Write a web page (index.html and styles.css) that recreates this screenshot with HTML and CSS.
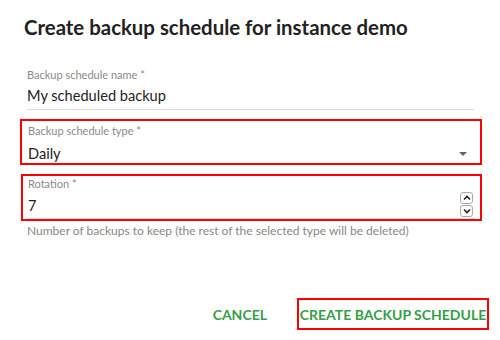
FILE: index.html
```html
<!DOCTYPE html>
<html>
<head>
<meta charset="utf-8">
<link rel="stylesheet" href="styles.css">
</head>
<body>
<div class="dialog">
  <h1 class="title">Create backup schedule for instance demo</h1>
  <div class="field plain">
    <div class="label">Backup schedule name *</div>
    <div class="value">My scheduled backup</div>
  </div>
  <div class="hl hl-type">
    <div class="field select">
      <div class="label">Backup schedule type *</div>
      <div class="row">
        <div class="value">Daily</div>
        <span class="caret"></span>
      </div>
    </div>
  </div>
  <div class="hl hl-rot">
    <div class="field number">
      <div class="label">Rotation *</div>
      <div class="row">
        <div class="value">7</div>
        <div class="spin">
          <span class="spin-btn"><svg width="8" height="6" viewBox="0 0 8 6"><path d="M1 4.5 L4 1.5 L7 4.5" fill="none" stroke="#222" stroke-width="1.6"/></svg></span>
          <span class="spin-btn"><svg width="8" height="6" viewBox="0 0 8 6"><path d="M1 1.5 L4 4.5 L7 1.5" fill="none" stroke="#222" stroke-width="1.6"/></svg></span>
        </div>
      </div>
    </div>
  </div>
  <div class="helper">Number of backups to keep (the rest of the selected type will be deleted)</div>
  <div class="actions">
    <button class="btn cancel">CANCEL</button>
    <button class="btn create">CREATE BACKUP SCHEDULE</button>
  </div>
</div>
</body>
</html>
```
FILE: styles.css
```css
html, body {
  margin: 0;
  padding: 0;
  background: #fff;
}
body {
  width: 500px;
  height: 340px;
  overflow: hidden;
  font-family: Lato, "Liberation Sans", sans-serif;
  color: #222;
}
.dialog {
  display: flex;
  flex-direction: column;
  height: 340px;
}
.title {
  margin: 13px 0 0 24px;
  font-size: 20.4px;
  line-height: 28px;
  font-weight: 700;
  color: #222;
}
.field {
  display: flex;
  flex-direction: column;
}
.label {
  font-size: 11px;
  line-height: 14px;
  color: #8a8a8a;
}
.value {
  font-size: 14.6px;
  line-height: 20px;
  color: #222;
}
.plain {
  margin: 27px 0 0 27px;
  width: 447px;
  border-bottom: 1px solid #ddd;
  padding-bottom: 3px;
}
.plain .value {
  margin-top: 4px;
}
.hl {
  border: 2px solid #f00;
  box-sizing: border-box;
}
.hl-type {
  margin: 9px 0 0 20px;
  width: 462px;
  height: 46px;
  padding: 3px 0 0 6px;
}
.row {
  display: flex;
  align-items: center;
}
.select .row {
  margin-top: 6px;
}
.caret {
  margin-left: auto;
  margin-right: 13px;
  width: 0;
  height: 0;
  border-left: 4px solid transparent;
  border-right: 4px solid transparent;
  border-top: 4px solid #666;
}
.hl-rot {
  margin: 9px 0 0 21px;
  width: 461px;
  height: 47px;
  padding: 1px 0 0 5px;
}
.number {
  width: 447px;
  border-bottom: 1px solid #ddd;
}
.number .row {
  margin-top: 0;
  height: 27px;
}
.number .value {
  margin-top: 2px;
}
.spin {
  margin-left: auto;
  margin-right: 2px;
  display: flex;
  flex-direction: column;
  gap: 1px;
}
.spin-btn {
  width: 13px;
  height: 12px;
  border: 1px solid #aaa;
  border-radius: 3px;
  box-sizing: border-box;
  display: flex;
  align-items: center;
  justify-content: center;
  background: #fff;
}
.helper {
  margin: 2px 0 0 27px;
  font-size: 12px;
  line-height: 15px;
  color: #888;
}
.actions {
  margin-top: auto;
  margin-bottom: 10px;
  display: flex;
  justify-content: flex-end;
  align-items: center;
  padding-right: 11px;
}
.btn {
  background: none;
  border: none;
  font-family: Lato, "Liberation Sans", sans-serif;
  font-weight: 700;
  font-size: 14px;
  color: #34a047;
  padding: 0;
  cursor: pointer;
}
.cancel {
  margin-right: 30px;
}
.create {
  border: 2px solid #f00;
  height: 32px;
  padding: 0;
  width: 192px;
}
```
